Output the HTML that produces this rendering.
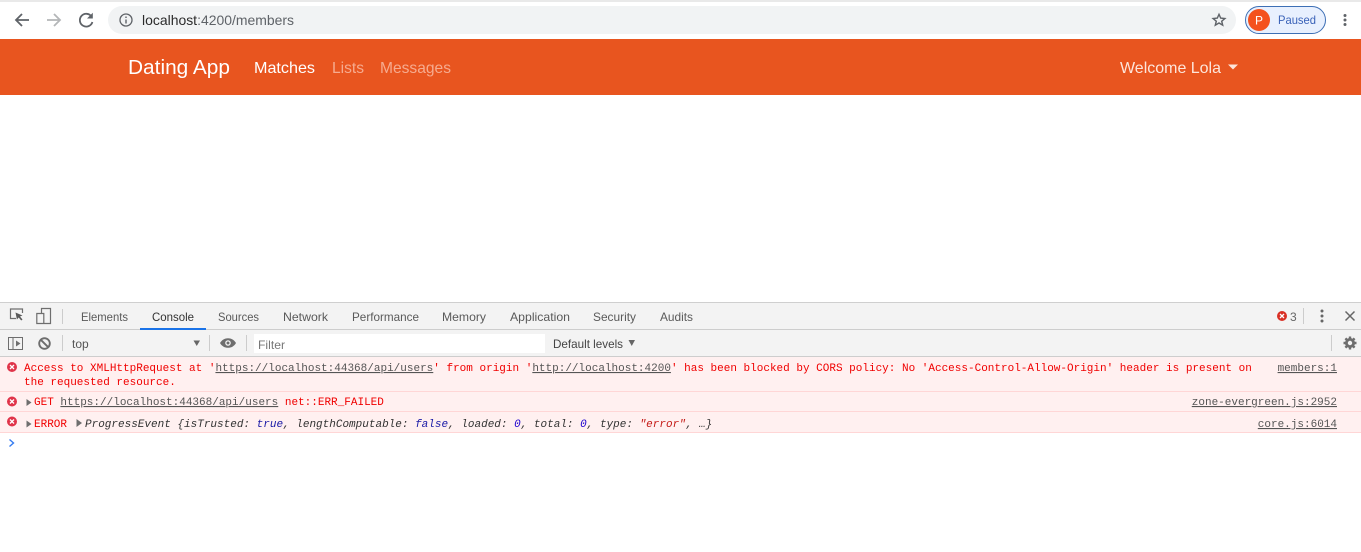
<!DOCTYPE html>
<html lang="en"><head><meta charset="utf-8"><title>Dating App</title>
<style>
html,body{margin:0;padding:0;background:#fff;width:1361px;height:552px;overflow:hidden}
svg{display:block}
text{white-space:pre}
.u{font-family:"Liberation Sans",sans-serif}
.t{font-family:"Liberation Sans",sans-serif;font-size:12px;fill:#5a5a5a}
.m{font-family:"Liberation Mono",monospace;font-size:11px;fill:#f00000}
.l{fill:#555;text-decoration:underline}
.r{font-family:"Liberation Mono",monospace;font-size:11px;fill:#555;text-decoration:underline}
.i{font-family:"Liberation Mono",monospace;font-size:11px;font-style:italic;fill:#333}
</style></head>
<body>
<svg width="1361" height="552" viewBox="0 0 1361 552" xmlns="http://www.w3.org/2000/svg">
<rect width="1361" height="552" fill="#fff"/>
<!-- browser chrome -->
<rect width="1361" height="2" fill="#e9e9e9"/>
<path d="M29 20H16M22 14L16 20l6 6" fill="none" stroke="#5f6368" stroke-width="1.800"/>
<path d="M47 20H60M54 14L60 20l-6 6" fill="none" stroke="#b4b6b8" stroke-width="1.800"/>
<path d="M91.500 16.500A6.400 6.400 0 1 0 92.400 22" fill="none" stroke="#5f6368" stroke-width="1.800"/>
<path d="M92.800 12.800V18.500H87z" fill="#5f6368"/>
<rect x="108" y="6" width="1128" height="28" rx="14" fill="#f1f3f4"/>
<circle cx="126" cy="20" r="6" fill="none" stroke="#5f6368" stroke-width="1.300"/>
<path d="M126 19.500v4M126 16.500v1.500" stroke="#5f6368" stroke-width="1.400"/>
<text x="142" y="25" textLength="152" lengthAdjust="spacingAndGlyphs" class="u" font-size="14" fill="#5f6368"><tspan fill="#2b2b2b">localhost</tspan>:4200/members</text>
<path d="M1219 14.300l1.700 3.800 4.200.4-3.200 2.700 1 4-3.700-2.200-3.700 2.200 1-4-3.200-2.700 4.200-.4z" fill="none" stroke="#5f6368" stroke-width="1.400"/>
<rect x="1245.500" y="6.500" width="80" height="27" rx="13.500" fill="#e8f0fe" stroke="#3d6fb5" stroke-width="1"/>
<circle cx="1259" cy="20" r="11" fill="#f4511e"/>
<text x="1255" y="24.500" class="u" font-size="12" fill="#fff">P</text>
<text x="1278" y="24" textLength="38" lengthAdjust="spacingAndGlyphs" class="u" font-size="12" fill="#3a62b8">Paused</text>
<circle cx="1345" cy="15.500" r="1.500" fill="#5f6368"/><circle cx="1345" cy="20" r="1.500" fill="#5f6368"/><circle cx="1345" cy="24.500" r="1.500" fill="#5f6368"/>
<!-- navbar -->
<rect y="39" width="1361" height="56" fill="#e8551f"/>
<text x="128" y="74" textLength="102" lengthAdjust="spacingAndGlyphs" class="u" font-size="20" fill="#fff">Dating App</text>
<text x="254" y="73" textLength="61" lengthAdjust="spacingAndGlyphs" class="u" font-size="16" fill="#fff">Matches</text>
<text x="332" y="73" textLength="32" lengthAdjust="spacingAndGlyphs" class="u" font-size="16" fill="#f6ab8f">Lists</text>
<text x="380" y="73" textLength="71" lengthAdjust="spacingAndGlyphs" class="u" font-size="16" fill="#f6ab8f">Messages</text>
<text x="1120" y="73" textLength="101" lengthAdjust="spacingAndGlyphs" class="u" font-size="16" fill="#fde5da">Welcome Lola</text>
<path d="M1228 64.500h10l-5 5z" fill="#fde5da"/>
<!-- devtools tabs -->
<rect y="302" width="1361" height="28" fill="#f3f3f3"/>
<rect y="302" width="1361" height="1" fill="#cfcfcf"/>
<rect y="329" width="1361" height="1" fill="#cdcdcd"/>
<path d="M16 318.500h-5.500v-9.500h12v4" fill="none" stroke="#6e6e6e" stroke-width="1.200"/>
<path d="M15.500 312.500l7 3-2.500 1 2.500 3-1.300 1-2.500-3-1.800 2z" fill="#5a5a5a"/>
<path d="M41.500 313v-4.500h9v15h-9M36.800 313.500h7v10h-7z" fill="none" stroke="#6e6e6e" stroke-width="1.200"/>
<rect x="62" y="309" width="1" height="15" fill="#ccc"/>
<text x="81" y="321" textLength="47" lengthAdjust="spacingAndGlyphs" class="t">Elements</text>
<text x="152" y="321" textLength="42" lengthAdjust="spacingAndGlyphs" class="t" style="fill:#333">Console</text>
<text x="218" y="321" textLength="41" lengthAdjust="spacingAndGlyphs" class="t">Sources</text>
<text x="283" y="321" textLength="45" lengthAdjust="spacingAndGlyphs" class="t">Network</text>
<text x="352" y="321" textLength="67" lengthAdjust="spacingAndGlyphs" class="t">Performance</text>
<text x="442" y="321" textLength="44" lengthAdjust="spacingAndGlyphs" class="t">Memory</text>
<text x="510" y="321" textLength="60" lengthAdjust="spacingAndGlyphs" class="t">Application</text>
<text x="593" y="321" textLength="43" lengthAdjust="spacingAndGlyphs" class="t">Security</text>
<text x="660" y="321" textLength="33" lengthAdjust="spacingAndGlyphs" class="t">Audits</text>
<rect x="140" y="328" width="66" height="2" fill="#1a73e8"/>
<circle cx="1282" cy="316" r="5" fill="#d93025"/>
<path d="M1280 314l4 4M1284 314l-4 4" stroke="#fff" stroke-width="1.300"/>
<text x="1290" y="321" class="t" style="fill:#666">3</text>
<rect x="1303" y="308" width="1" height="16" fill="#ccc"/>
<circle cx="1322" cy="311" r="1.500" fill="#666"/><circle cx="1322" cy="316" r="1.500" fill="#666"/><circle cx="1322" cy="321" r="1.500" fill="#666"/>
<path d="M1345.500 311.500l9 9M1354.500 311.500l-9 9" stroke="#666" stroke-width="1.500"/>
<!-- console toolbar -->
<rect y="330" width="1361" height="26" fill="#f3f3f3"/>
<rect y="356" width="1361" height="1" fill="#cdcdcd"/>
<path d="M8.500 337.500h14v12h-14zM13 337.500v12" fill="none" stroke="#6e6e6e" stroke-width="1"/>
<path d="M16 340.500l4.500 3-4.500 3z" fill="#6e6e6e"/>
<circle cx="44.500" cy="343.500" r="5.300" fill="none" stroke="#6e6e6e" stroke-width="1.900"/>
<path d="M40.800 339.800l7.400 7.400" stroke="#6e6e6e" stroke-width="1.900"/>
<rect x="62" y="335" width="1" height="16" fill="#ccc"/>
<text x="72" y="348" class="t" style="fill:#555">top</text>
<path d="M193.500 340.500h6.500l-3.250 5.500z" fill="#666"/>
<rect x="209" y="335" width="1" height="16" fill="#ccc"/>
<path d="M220 343c2-3.500 5-4.800 8-4.800s6 1.300 8 4.800c-2 3.500-5 4.800-8 4.800s-6-1.300-8-4.800z" fill="#6e6e6e"/>
<circle cx="228" cy="343" r="2.800" fill="#f3f3f3"/>
<circle cx="228" cy="343" r="1.500" fill="#6e6e6e"/>
<rect x="246" y="335" width="1" height="16" fill="#ccc"/>
<rect x="254" y="334" width="291" height="19" fill="#fff"/>
<text x="258" y="349" textLength="27" lengthAdjust="spacingAndGlyphs" class="t" style="fill:#777">Filter</text>
<text x="553" y="348" textLength="70" lengthAdjust="spacingAndGlyphs" class="t" style="fill:#444">Default levels</text>
<path d="M628.500 340h6.500l-3.250 6z" fill="#666"/>
<rect x="1331" y="335" width="1" height="16" fill="#ccc"/>
<path d="M1350 336.500v13M1343.500 343h13M1345.400 338.400l9.200 9.200M1354.600 338.400l-9.200 9.200" stroke="#6e6e6e" stroke-width="2.400"/>
<circle cx="1350" cy="343" r="5" fill="#6e6e6e"/>
<circle cx="1350" cy="343" r="2.200" fill="#f3f3f3"/>
<!-- console messages -->
<rect y="357" width="1361" height="76" fill="#fff0f0"/>
<rect y="391" width="1361" height="1" fill="#ffd6d6"/>
<rect y="411" width="1361" height="1" fill="#ffd6d6"/>
<rect y="432" width="1361" height="1" fill="#ffd6d6"/>
<g id="err">
<circle cx="12" cy="367" r="5" fill="#e0344a"/>
<path d="M10 365l4 4M14 365l-4 4" stroke="#fff" stroke-width="1.300"/>
<circle cx="12" cy="401.500" r="5" fill="#e0344a"/>
<path d="M10 399.500l4 4M14 399.500l-4 4" stroke="#fff" stroke-width="1.300"/>
<circle cx="12" cy="421.500" r="5" fill="#e0344a"/>
<path d="M10 419.500l4 4M14 419.500l-4 4" stroke="#fff" stroke-width="1.300"/>
</g>
<text x="24" y="371" class="m">Access to XMLHttpRequest at '<tspan class="l">https://localhost:44368/api/users</tspan>' from origin '<tspan class="l">http://localhost:4200</tspan>' has been blocked by CORS policy: No 'Access-Control-Allow-Origin' header is present on</text>
<text x="24" y="385" class="m">the requested resource.</text>
<text x="1337" y="371" text-anchor="end" class="r">members:1</text>
<path d="M26.500 399l5 3.500-5 3.500z" fill="#6e6e6e"/>
<text x="34" y="405" class="m">GET <tspan class="l">https://localhost:44368/api/users</tspan> net::ERR_FAILED</text>
<text x="1337" y="405" text-anchor="end" class="r">zone-evergreen.js:2952</text>
<path d="M26.500 420.500l5 3.500-5 3.500z" fill="#6e6e6e"/>
<text x="34" y="427" class="m">ERROR</text>
<path d="M76.500 419l5.500 4-5.500 4z" fill="#6e6e6e"/>
<text x="85" y="427" class="i">ProgressEvent {isTrusted: <tspan fill="#1a1aa6">true</tspan>, lengthComputable: <tspan fill="#1a1aa6">false</tspan>, loaded: <tspan fill="#1c00cf">0</tspan>, total: <tspan fill="#1c00cf">0</tspan>, type: <tspan fill="#c41a16">"error"</tspan>, …}</text>
<text x="1337" y="427" text-anchor="end" class="r">core.js:6014</text>
<path d="M9.500 439.500l4 3.500-4 3.500" fill="none" stroke="#367cf1" stroke-width="1.400"/>
</svg>
</body></html>
